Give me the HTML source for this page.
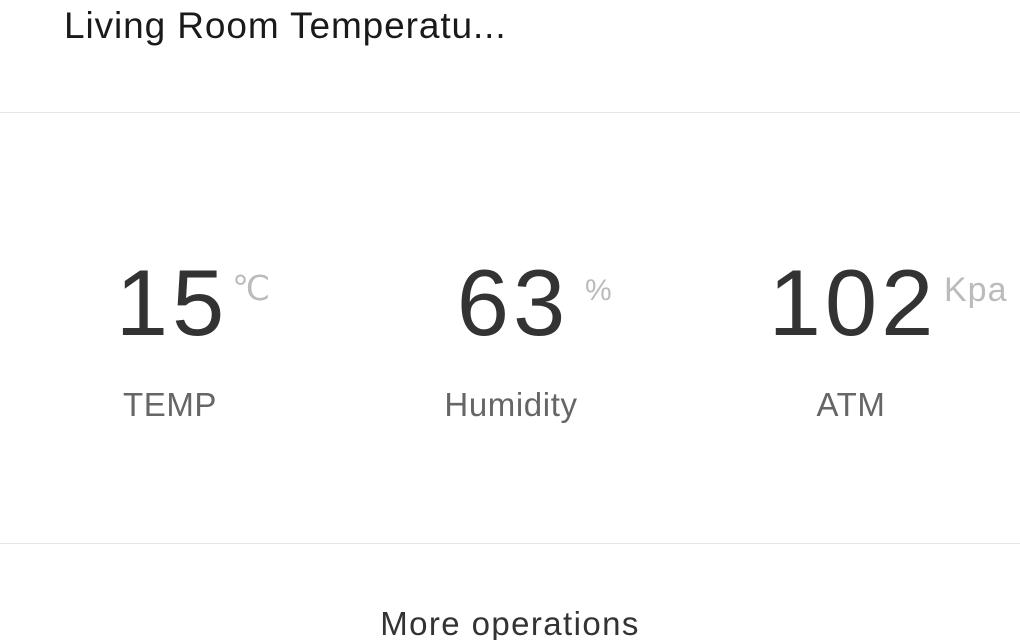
<!DOCTYPE html>
<html><head><meta charset="utf-8"><style>
html,body{margin:0;padding:0;background:#fff;width:1020px;height:640px;overflow:hidden;font-family:"Liberation Sans",sans-serif;position:relative;}
.title{position:absolute;left:64px;top:4px;font-size:37px;letter-spacing:0.9px;color:#1a1a1a;line-height:44px;white-space:nowrap;}
.hr{position:absolute;left:0;width:1020px;height:1px;background:#e6e6e6;}
.num{position:absolute;top:256px;width:340px;text-align:center;font-size:94px;letter-spacing:4px;line-height:94px;color:#333;}
.unit{position:absolute;font-size:34px;line-height:34px;color:#bbb;white-space:nowrap;}
.lab{position:absolute;top:386px;width:340px;text-align:center;font-size:33px;letter-spacing:0.6px;line-height:38px;color:#666;}
.more{position:absolute;top:602px;left:0;width:1020px;text-align:center;font-size:33px;letter-spacing:1.4px;line-height:44px;color:#333;}
</style></head><body>
<div class="title">Living Room Temperatu...</div>
<div class="hr" style="top:112px"></div>
<div class="num" style="left:2px">15</div>
<div class="lab" style="left:0">TEMP</div>
<div class="unit" style="left:232px;top:272px">℃</div>
<div class="num" style="left:343px">63</div>
<div class="lab" style="left:341px">Humidity</div>
<div class="unit" style="left:585px;top:274px;font-size:30px">%</div>
<div class="num" style="left:683px">102</div>
<div class="lab" style="left:681px">ATM</div>
<div class="unit" style="left:944px;top:273px;letter-spacing:1px">Kpa</div>
<div class="hr" style="top:543px"></div>
<div class="more">More operations</div>
</body></html>
